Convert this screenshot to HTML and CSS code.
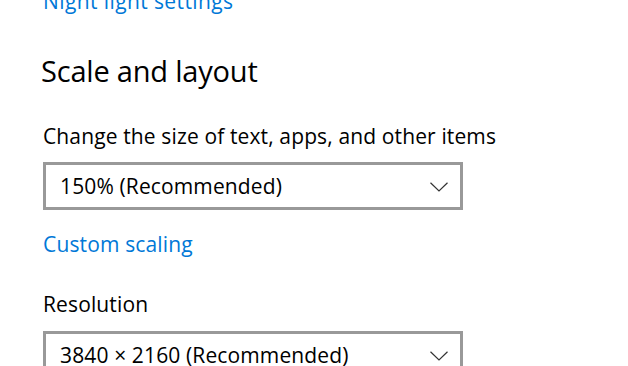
FILE: index.html
```html
<!DOCTYPE html>
<html lang="en">
<head>
<meta charset="utf-8">
<title>Display settings</title>
<link rel="stylesheet" href="styles.css">
</head>
<body>
<main class="page">
  <a class="link link-top" href="#">Night light settings</a>
  <h2 class="heading">Scale and layout</h2>
  <div class="label">Change the size of text, apps, and other items</div>
  <div class="select">
    <span class="select-text">150% (Recommended)</span>
    <svg class="chev" width="18" height="10" viewBox="0 0 18 10"><path d="M0.5 0.8 L9 9 L17.5 0.8" fill="none" stroke="#333" stroke-width="1.2"/></svg>
  </div>
  <a class="link link-custom" href="#">Custom scaling</a>
  <div class="label label-res">Resolution</div>
  <div class="select select-res">
    <span class="select-text">3840 × 2160 (Recommended)</span>
    <svg class="chev" width="18" height="10" viewBox="0 0 18 10"><path d="M0.5 0.8 L9 9 L17.5 0.8" fill="none" stroke="#333" stroke-width="1.2"/></svg>
  </div>
</main>
</body>
</html>
```
FILE: styles.css
```css
html, body {
  margin: 0;
  padding: 0;
  background: #fff;
  overflow: hidden;
}
body {
  width: 628px;
  height: 366px;
  font-family: "Open Sans", "Noto Sans", sans-serif;
  color: #000;
}
.page {
  display: flex;
  flex-direction: column;
  align-items: flex-start;
  padding-left: 43px;
  margin-top: -13px;
}
.link {
  display: block;
  font-size: 21px;
  line-height: 28px;
  letter-spacing: 0.15px;
  color: #0078d7;
  text-decoration: none;
}
.link-top {
  letter-spacing: 0.4px;
}
.heading {
  margin: 36px 0 0 -2px;
  font-size: 29px;
  line-height: 40px;
  font-weight: 400;
  letter-spacing: -0.2px;
}
.label {
  margin-top: 31px;
  font-size: 21px;
  line-height: 28px;
  letter-spacing: 0.13px;
}
.select {
  box-sizing: border-box;
  width: 420px;
  height: 48px;
  margin-top: 12px;
  border: 3px solid #999;
  padding: 0 12px 0 14px;
  display: flex;
  align-items: center;
  justify-content: space-between;
}
.select-text {
  font-size: 21px;
  line-height: 42px;
  letter-spacing: 0.13px;
  white-space: nowrap;
}
.chev {
  display: block;
  margin-top: 1px;
}
.link-custom {
  margin-top: 20px;
}
.label-res {
  margin-top: 32px;
}
.select-res {
  margin-top: 13px;
}
```
